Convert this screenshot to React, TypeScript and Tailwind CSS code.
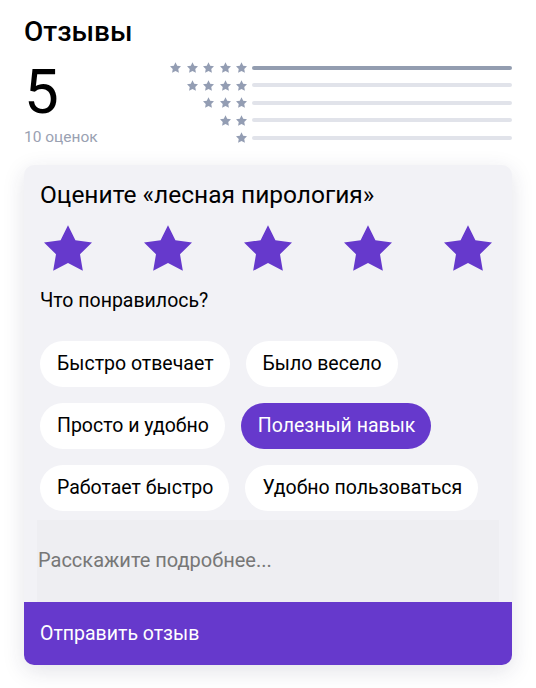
import React from "react";

const STAR = "M12 2l3.09 6.26L22 9.27l-5 4.87 1.18 6.88L12 17.77l-6.18 3.25L7 14.14 2 9.27l6.91-1.01L12 2z";

function Star({ className }: { className?: string }) {
  return (
    <svg viewBox="2 2 20 19.02" className={className} fill="currentColor">
      <path d={STAR} />
    </svg>
  );
}

const rows = [
  { n: 5, dark: true },
  { n: 4, dark: false },
  { n: 3, dark: false },
  { n: 2, dark: false },
  { n: 1, dark: false },
];

const chips = [
  [
    { t: "Быстро отвечает", on: false },
    { t: "Было весело", on: false },
  ],
  [
    { t: "Просто и удобно", on: false },
    { t: "Полезный навык", on: true },
  ],
  [
    { t: "Работает быстро", on: false },
    { t: "Удобно пользоваться", on: false },
  ],
];

export default function App() {
  return (
    <div
      className="w-[536px] h-[688px] bg-white px-6 pt-[15px] text-black"
      style={{ fontFamily: "Roboto, 'Noto Sans', sans-serif" }}
    >
      <h1 className="text-[28px] leading-[34px] font-medium">Отзывы</h1>
      <div className="flex mt-[10px]">
        <div className="w-[146px] flex flex-col">
          <div className="text-[62px] leading-[62px] font-normal mt-[2px]">5</div>
          <div className="text-[15.5px] leading-[20px] text-[#9aa1b2] mt-[4px]">10 оценок</div>
        </div>
        <div className="flex-1 flex flex-col">
          {rows.map((r) => (
            <div key={r.n} className="flex items-center h-[17.5px]">
              <div className="w-[77px] flex justify-end gap-[5.4px] text-[#939db3]">
                {Array.from({ length: r.n }).map((_, i) => (
                  <Star key={i} className="w-[11px] h-[11px]" />
                ))}
              </div>
              <div
                className={
                  r.dark
                    ? "ml-[5px] flex-1 h-[4px] rounded-full bg-[#939db0]"
                    : "ml-[5px] flex-1 h-[4px] rounded-full bg-[#e1e3ea]"
                }
              />
            </div>
          ))}
        </div>
      </div>

      <div className="mt-[18px] rounded-[10px] bg-[#f2f2f6] shadow-[0_6px_22px_rgba(40,40,80,0.13)] overflow-hidden">
        <div className="px-4 pt-[16px]">
          <div className="text-[24.5px] leading-[28px] font-normal">Оцените «лесная пирология»</div>
          <div className="flex justify-between mt-[16px]">
            {[0, 1, 2, 3, 4].map((i) => (
              <div key={i} className="w-[56px] flex justify-center">
                <Star className="w-[48px] h-[46px] text-[#6639cc]" />
              </div>
            ))}
          </div>
          <div className="text-[19.5px] leading-[24px] mt-[18px]">Что понравилось?</div>
          <div className="flex flex-col gap-4 mt-[28px]">
            {chips.map((row, ri) => (
              <div key={ri} className="flex gap-4">
                {row.map((c) => (
                  <div
                    key={c.t}
                    className={
                      c.on
                        ? "h-[46px] pl-[17px] pr-4 rounded-full bg-[#6639cc] text-white flex items-center text-[19.5px]"
                        : "h-[46px] pl-[17px] pr-4 rounded-full bg-white text-black flex items-center text-[19.5px]"
                    }
                  >
                    {c.t}
                  </div>
                ))}
              </div>
            ))}
          </div>
        </div>
        <div className="mx-[13px] mt-[9px] h-[82px] bg-[#eeeef2] flex items-center">
          <span className="text-[20px] text-[#777] pl-[1px] -mt-[2px]">Расскажите подробнее...</span>
        </div>
        <div className="h-[63px] bg-[#6639cc] text-white text-[19.5px] flex items-center px-4">
          Отправить отзыв
        </div>
      </div>
    </div>
  );
}
